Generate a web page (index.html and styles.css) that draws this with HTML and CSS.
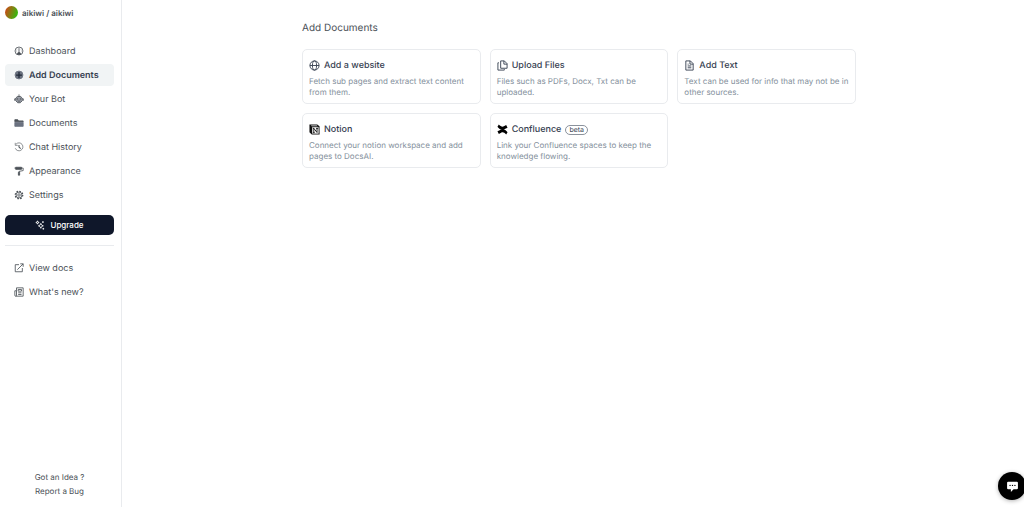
FILE: index.html
```html
<!DOCTYPE html>
<html lang="en">
<head>
  <meta charset="UTF-8">
  <meta name="viewport" content="width=device-width, initial-scale=1.0">
  <title>Add Documents</title>
  <link rel="stylesheet" href="styles.css">
</head>
<body>
  <aside class="sidebar">
    <a href="#" class="team"><span class="avatar"></span>aikiwi / aikiwi</a>

    <nav class="nav">
      <a href="#">
        <svg class="icon" viewBox="0 0 24 24"><circle cx="12" cy="12" r="9.5"/><path d="M12 5v11M7 7.500v.5M17 7.500v.5M5.500 12h1M17.500 12h1"/><path d="M8 20l1.500-4h5l1.500 4z" fill="currentColor"/></svg>
        Dashboard
      </a>
      <a href="#" class="active">
        <svg class="icon" viewBox="0 0 24 24"><circle cx="12" cy="12" r="9.500" fill="#6b7280" stroke="#6b7280"/><path d="M12 5v14M5 12h14" stroke="#1f2937" stroke-width="3"/></svg>
        Add Documents
      </a>
      <a href="#">
        <svg class="icon" viewBox="0 0 24 24"><path d="M12 1v6M1.500 11v5M22.500 11v5"/><path d="M4 10l4-4h8l4 4v6l-5 5H9l-5-5z" fill="#9ca0aa"/><circle cx="8.500" cy="12" r="1.500" fill="#fff"/><circle cx="15.500" cy="12" r="1.500" fill="#fff"/><path d="M9 17h6"/></svg>
        Your Bot
      </a>
      <a href="#">
        <svg class="icon" viewBox="0 0 24 24"><path d="M2 4h7l2 3h11v2H2z" fill="currentColor"/><path d="M2 10.500h20V20H2z" fill="#6b7280" stroke="#6b7280"/></svg>
        Documents
      </a>
      <a href="#">
        <svg class="icon" viewBox="0 0 24 24"><path d="M5 5a9.500 9.500 0 1 1-2 10M3 2v6h6" stroke-width="1.500"/><path d="M12 7v5l4 4" stroke-width="2.500"/></svg>
        Chat History
      </a>
      <a href="#">
        <svg class="icon" viewBox="0 0 24 24"><path d="M4 3h14v5H4z" fill="currentColor"/><path d="M4 5H1M18 5h4v6l-10 2v2"/><path d="M10.500 15h3v7h-3z" fill="currentColor"/></svg>
        Appearance
      </a>
      <a href="#">
        <svg class="icon" viewBox="0 0 24 24"><circle cx="12" cy="12" r="9" stroke-width="3" stroke-dasharray="4 3"/><circle cx="12" cy="12" r="7"/><circle cx="12" cy="12" r="3"/></svg>
        Settings
      </a>
    </nav>

    <button type="button" class="upgrade">
      <svg class="icon" viewBox="0 0 24 24"><path d="M14 8l1.800 4.200L20 14l-4.200 1.800L14 20l-1.800-4.200L8 14l4.200-1.800zM6 2l1 3 3 1-3 1-1 3-1-3-3-1 3-1zM19 3v4M17 5h4M20 19v4M18 21h4"/></svg>
      Upgrade
    </button>

    <nav class="nav nav-links">
      <a href="#">
        <svg class="icon" viewBox="0 0 24 24"><path d="M12 4H3v17h17v-9M8 16L22 2M15 2h7v7"/></svg>
        View docs
      </a>
      <a href="#">
        <svg class="icon" viewBox="0 0 24 24"><path d="M6 2h16v20H4a2 2 0 0 1-2-2V9h4zM6 9v11a2 2 0 0 1-2 2M10 6h8v4h-8zM10 14h8M10 18h8"/></svg>
        What's new?
      </a>
    </nav>

    <div class="feedback">
      <a href="#">Got an Idea ?</a>
      <a href="#">Report a Bug</a>
    </div>
  </aside>

  <main class="main">
    <div class="content">
      <h1>Add Documents</h1>
      <div class="cards">
        <a href="#" class="card">
          <h2>
            <svg class="icon" viewBox="0 0 24 24"><circle cx="12" cy="12" r="10"/><ellipse cx="12" cy="12" rx="4.500" ry="10"/><path d="M2 12h20"/></svg>
            Add a website
          </h2>
          <p>Fetch sub pages and extract text content from them.</p>
        </a>
        <a href="#" class="card">
          <h2>
            <svg class="icon" viewBox="0 0 24 24"><path d="M8 2h8l6 6v10H8zM15 2v7h7M4 6H2v16h14v-2"/></svg>
            Upload Files
          </h2>
          <p>Files such as PDFs, Docx, Txt can be uploaded.</p>
        </a>
        <a href="#" class="card">
          <h2>
            <svg class="icon" viewBox="0 0 24 24"><path d="M4 2h10l6 6v14H4zM13 2v7h7M8 9h2M8 13h8M8 17h8"/></svg>
            Add Text
          </h2>
          <p>Text can be used for info that may not be in other sources.</p>
        </a>
        <a href="#" class="card">
          <h2>
            <svg class="icon logo" viewBox="0 0 24 24"><path d="M1 1h17l5 4v18H6l-5-5z" fill="#111"/><path d="M7 7h14v14H7z" fill="#fff"/><path d="M4 3h13l2 2H6z" fill="#fff"/><path d="M10.500 19V9.500l7 9V9M8.500 19H12.500M15.500 9.500H20M8.500 9.500H11" fill="none" stroke="#111" stroke-width="2"/></svg>
            Notion
          </h2>
          <p>Connect your notion workspace and add pages to DocsAI.</p>
        </a>
        <a href="#" class="card">
          <h2>
            <svg class="icon logo" viewBox="0 0 24 24"><path d="M4 1c4 4 7 6 11 4l5-3 3 6-6 3c-8 4-13-1-16-5zM20 23c-4-4-7-6-11-4l-5 3-3-6 6-3c8-4 13 1 16 5z" fill="#000"/></svg>
            Confluence
            <span class="badge">beta</span>
          </h2>
          <p>Link your Confluence spaces to keep the knowledge flowing.</p>
        </a>
      </div>
    </div>
  </main>

  <button type="button" class="chat" aria-label="Open chat">
    <svg viewBox="0 0 24 24"><path d="M4 3h16a2 2 0 0 1 2 2v10a2 2 0 0 1-2 2h-6l-5 5v-5H4a2 2 0 0 1-2-2V5a2 2 0 0 1 2-2z" fill="#fff"/><circle cx="7.500" cy="10" r="1.300"/><circle cx="12" cy="10" r="1.300"/><circle cx="16.500" cy="10" r="1.300"/></svg>
  </button>
</body>
</html>
```
FILE: styles.css
```css
* {
  box-sizing: border-box;
}
body {
  font-family: Inter, "Liberation Sans", sans-serif;
  font-size: 9px;
  text-rendering: geometricPrecision;
  color: #4b5157;
  background-color: #fff;
  display: flex;
  min-height: 100vh;
  margin: 0;
}
a {
  color: inherit;
  text-decoration: none;
}
h1, h2, p {
  margin: 0;
}
.icon {
  width: 10px;
  height: 10px;
  flex: none;
  fill: none;
  stroke: currentColor;
  stroke-width: 2;
}

/* sidebar */
.sidebar {
  width: 122px;
  flex: none;
  display: flex;
  flex-direction: column;
  padding: 5px 7px 10px 5px;
  border-right: 1px solid #e9ebee;
}
.team {
  display: flex;
  align-items: center;
  gap: 4px;
  height: 15px;
  font-size: 8px;
  font-weight: 600;
}
.avatar {
  width: 13px;
  height: 13px;
  border-radius: 50%;
  background: linear-gradient(110deg, #c94b16 10%, #39b810 85%);
}
.nav {
  display: flex;
  flex-direction: column;
  gap: 2px;
  margin-top: 20px;
}
.nav a {
  display: flex;
  align-items: center;
  gap: 5px;
  height: 22px;
  padding: 0 9px;
  border-radius: 4px;
}
.nav .active {
  background-color: #f1f4f5;
  color: #374151;
  font-weight: 600;
}
.upgrade {
  display: flex;
  align-items: center;
  justify-content: center;
  gap: 5px;
  height: 20px;
  margin-top: 9px;
  border: none;
  border-radius: 5px;
  background-color: #0f172a;
  color: #fff;
  font-family: inherit;
  font-size: 8px;
  font-weight: 500;
  cursor: pointer;
}
.nav-links {
  margin-top: 10px;
  padding-top: 11px;
  border-top: 1px solid #e9ebee;
}
.feedback {
  display: flex;
  flex-direction: column;
  align-items: center;
  gap: 3px;
  margin-top: auto;
  font-size: 8px;
  line-height: 11px;
}

/* main */
.main {
  flex: 1;
  padding: 22px 12px 22px 24px;
}
.content {
  max-width: 554px;
  margin: 0 auto;
}
h1 {
  font-size: 10px;
  font-weight: 400;
  line-height: 13px;
}
.cards {
  display: grid;
  grid-template-columns: repeat(3, 1fr);
  gap: 9px;
  margin-top: 14px;
}
.card {
  padding: 9px 6px 5px;
  border: 1px solid #e9ebee;
  border-radius: 5px;
}
.card h2 {
  display: flex;
  align-items: center;
  gap: 4px;
  height: 13px;
  font-size: 9px;
  font-weight: 500;
  color: #374151;
}
.card p {
  margin-top: 4px;
  font-size: 8px;
  line-height: 11px;
  color: #84909c;
}
.card .icon {
  width: 11px;
  height: 11px;
}
.card .logo {
  stroke: none;
}
.badge {
  padding: 0 3px;
  border: 1px solid #8b929c;
  border-radius: 5px;
  font-size: 7px;
  font-weight: 400;
  line-height: 8px;
}

/* chat bubble */
.chat {
  position: fixed;
  right: -2px;
  bottom: 7px;
  display: flex;
  align-items: center;
  justify-content: center;
  width: 28px;
  height: 28px;
  padding: 0;
  border: none;
  border-radius: 50%;
  background-color: #000;
  box-shadow: 0 1px 4px rgba(0, 0, 0, 0.3);
  cursor: pointer;
}
.chat svg {
  width: 13px;
  height: 13px;
}
```
